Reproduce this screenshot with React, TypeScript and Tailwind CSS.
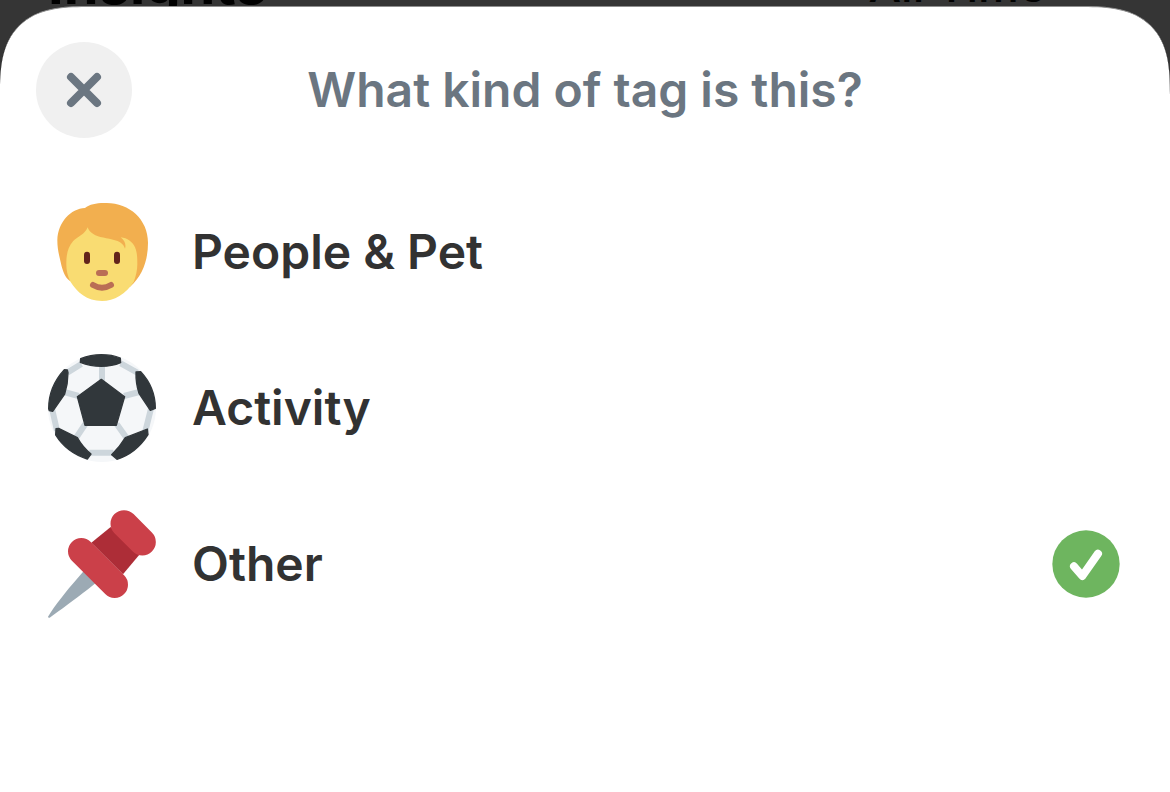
import { useState } from 'react';
import type { ReactNode } from 'react';

interface TagKind {
  id: string;
  label: string;
  icon: ReactNode;
}

function PersonIcon() {
  return (
    <svg viewBox="24 24 324 324" className="size-[108px] shrink-0" aria-hidden="true">
      <path
        fill="#F2AF4F"
        d="M135 54C150 42 172 38 200 39C268 39 324 88 324 158C324 210 308 258 270 290L90 273C72 262 66 235 60 208C55 186 52 172 52 150C54 96 92 56 135 54Z"
      />
      <path
        fill="#F9DC72"
        d="M143 112C147 124 156 132 172 138C195 146 222 146 240 157C249 163 253 169 255 176C259 164 254 152 242 142C262 144 278 156 285 172C291 186 292 200 292 222C292 240 288 258 281 276C258 312 222 333 186 333C140 333 112 308 90 273C82 256 79 240 79 222C79 190 84 172 99 154C113 140 136 132 143 112Z"
      />
      <rect x="132" y="185" width="18" height="37" rx="9" fill="#62241B" />
      <rect x="222" y="185" width="18" height="37" rx="9" fill="#62241B" />
      <rect x="168" y="240" width="36" height="18" rx="9" fill="#BA6E55" />
      <path d="M159 285Q186 301 213 285" fill="none" stroke="#BA6E55" strokeWidth="18" strokeLinecap="round" />
    </svg>
  );
}

function BallIcon() {
  return (
    <svg viewBox="24 42 324 324" className="size-[108px] shrink-0" aria-hidden="true">
      <circle cx="186" cy="204" r="162" fill="#F5F7F9" />
      <path
        fill="none"
        stroke="#CDD6DC"
        strokeWidth="18"
        d="M186 76V122M72 156L116 168M298 156L252 168M136 252L108 294M230 252L260 294M148 338H220M82 98L124 72M242 70L292 98M36 206L51 272M334 202L316 274"
      />
      <g fill="#31373B" stroke="#31373B" strokeWidth="4" strokeLinejoin="round">
        <path d="M184 118L254 170L229 256H135L112 170Z" />
        <path d="M122 56Q152 44 184 44Q216 44 241 54L242 68Q216 79 184 79Q150 79 121 67Z" />
        <path d="M84 98L82 90L73 89Q26 140 26 206L28 212L38 214L74 162Q84 130 84 98Z" />
        <path d="M288 96L302 95Q346 142 346 205L331 211L297 160Q287 130 288 96Z" />
        <path d="M48 266L56 265L112 293Q128 322 153 342L142 357Q80 338 47 285Z" />
        <path d="M322 267L324 284Q288 340 231 358L215 344Q240 320 256 293Z" />
      </g>
    </svg>
  );
}

function PinIcon() {
  return (
    <svg viewBox="24 30 324 324" className="size-[108px] shrink-0" aria-hidden="true">
      <path fill="#9CAAB4" d="M132 212L110 238C80 272 44 318 24 350Q24 354 29 353C60 332 104 298 144 268L168 248Z" />
      <path fill="#AD2D37" d="M212 81L154 128L249 223L298 164Z" />
      <g fill="none" stroke="#CB4049" strokeLinecap="round">
        <path strokeWidth="81" d="M252 71L307 126" />
        <path strokeWidth="80" d="M124 154L224 254" />
      </g>
    </svg>
  );
}

function CheckBadge() {
  return (
    <svg viewBox="36 30 204 204" className="size-[68px] shrink-0" aria-hidden="true">
      <circle cx="138" cy="132" r="101" fill="#6EB55F" />
      <path
        d="M102 139L127 168L174 101"
        fill="none"
        stroke="#fff"
        strokeWidth="24"
        strokeLinecap="round"
        strokeLinejoin="round"
      />
    </svg>
  );
}

const kinds: TagKind[] = [
  { id: 'people', label: 'People & Pet', icon: <PersonIcon /> },
  { id: 'activity', label: 'Activity', icon: <BallIcon /> },
  { id: 'other', label: 'Other', icon: <PinIcon /> },
];

export default function App() {
  const [selected, setSelected] = useState('other');

  return (
    <div className="flex min-h-screen flex-col bg-[#353535] font-['Inter','Roboto',sans-serif]">
      {/* Page behind the sheet, only its last pixels show */}
      <div className="flex h-[6px] items-end justify-between overflow-hidden pr-[124px] pl-12 whitespace-nowrap text-black">
        <span className="text-[56px] leading-[44px] font-bold">Insights</span>
        <span className="text-[46px] leading-[42px] font-medium">All Time</span>
      </div>

      <section className="flex-1 rounded-t-[70px] border-t border-[#8f8f8f] bg-white pb-12 supports-[corner-shape:squircle]:rounded-t-[89px] supports-[corner-shape:squircle]:[corner-shape:superellipse(1.5)]">
        <header className="grid grid-cols-[96px_1fr_96px] items-center px-9 pt-[35px]">
          <button
            type="button"
            aria-label="Close"
            className="flex size-24 items-center justify-center rounded-full bg-[#f0f0f0] text-[#6b7681]"
          >
            <svg viewBox="0 0 36 36" className="size-9" fill="none" stroke="currentColor" strokeWidth="8" strokeLinecap="round">
              <path d="M5 5L31 31M31 5L5 31" />
            </svg>
          </button>
          <h1 className="text-center text-5xl font-semibold text-[#6b7681]">What kind of tag is this?</h1>
        </header>

        <ul className="mt-[60px] flex flex-col gap-12">
          {kinds.map((kind) => (
            <li key={kind.id}>
              <button
                type="button"
                aria-pressed={selected === kind.id}
                onClick={() => setSelected(kind.id)}
                className="flex w-full items-center gap-9 pr-[50px] pl-12 text-left"
              >
                {kind.icon}
                <span className="flex-1 text-5xl font-semibold text-[#323232]">{kind.label}</span>
                {selected === kind.id && <CheckBadge />}
              </button>
            </li>
          ))}
        </ul>
      </section>
    </div>
  );
}
